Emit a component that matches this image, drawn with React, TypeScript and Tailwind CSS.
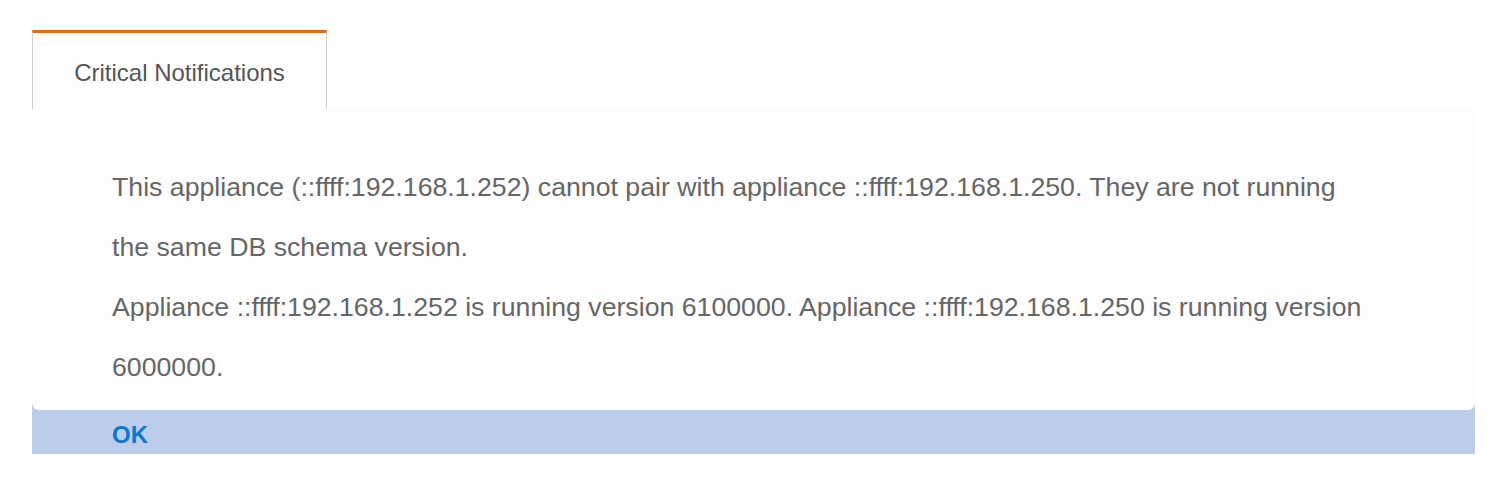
export default function App() {
  return (
    <div className="min-h-[494px] bg-white pt-[30px] pl-[32px] pr-[37px] font-['Liberation_Sans',Arial,sans-serif]">
      <div className="flex h-[79px] w-[295px] items-center justify-center border-x border-t-[3px] border-x-[#cfcfcf] border-t-[#e8690c] bg-[#fdfdfd] pt-[3px]">
        <span className="text-[24px] text-[#555]">Critical Notifications</span>
      </div>
      <div className="bg-[#bbcdeb]">
        <div className="rounded-b-[7px] bg-[#fdfdfd] pt-[48px] pb-[13px] pl-[80px]">
          <div className="text-[26.7px] leading-[60px] text-[#666]">
            <p>
              This appliance (::ffff:192.168.1.252) cannot pair with appliance ::ffff:192.168.1.250. They are not running
              <br />
              the same DB schema version.
            </p>
            <p>
              Appliance ::ffff:192.168.1.252 is running version 6100000. Appliance ::ffff:192.168.1.250 is running version
              <br />
              6000000.
            </p>
          </div>
        </div>
        <div className="flex h-[44px] items-center pt-[5px] pl-[80px]">
          <button className="text-[24px] font-bold text-[#0a78cc]">OK</button>
        </div>
      </div>
    </div>
  );
}
